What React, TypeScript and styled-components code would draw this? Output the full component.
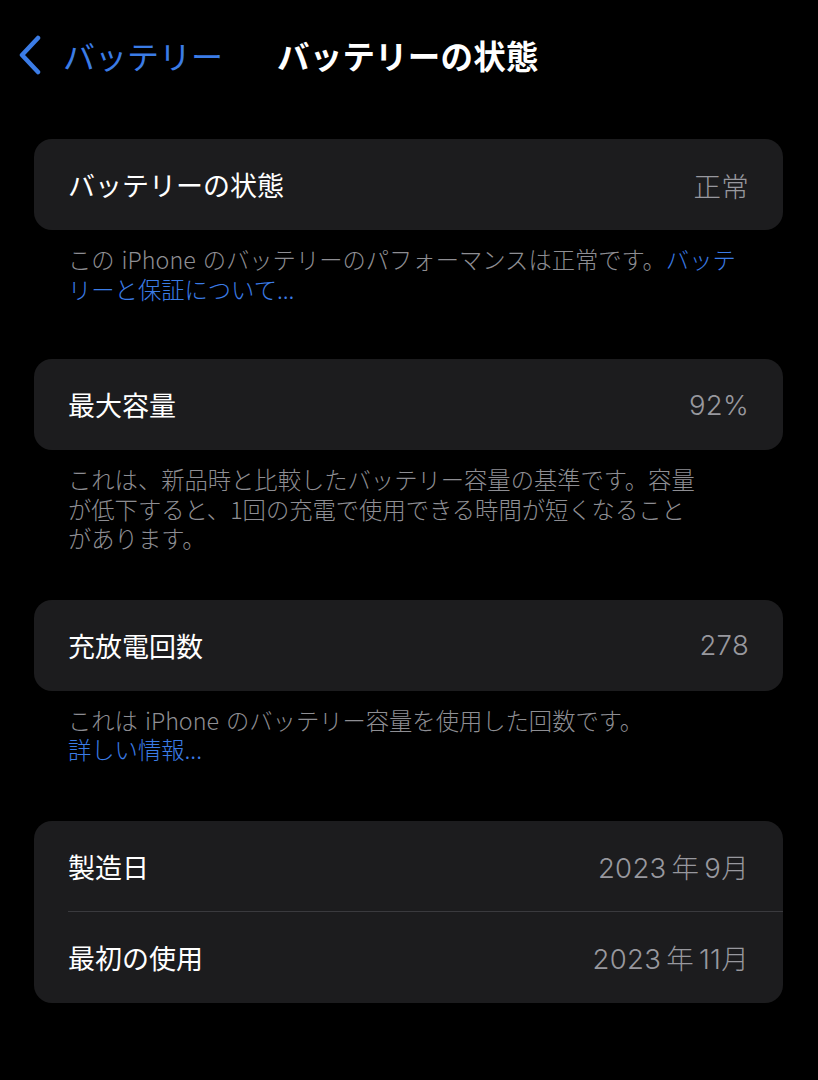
import React from "react";
import styled, { createGlobalStyle } from "styled-components";

const Global = createGlobalStyle`
  html, body { margin: 0; padding: 0; background: #000; }
  body { font-family: "Noto Sans CJK JP", "Noto Sans", sans-serif; -webkit-font-smoothing: antialiased; }
`;

const Page = styled.div`
  width: 818px;
  min-height: 1080px;
  background: #000;
  box-sizing: border-box;
  padding: 0 35px 0 34px;
`;

const NavBar = styled.div`
  display: flex;
  align-items: center;
  height: 110px;
  margin-left: -17px;
  box-sizing: border-box;
`;

const Back = styled.div`
  display: flex;
  align-items: center;
  gap: 20px;
  color: #3b7ce6;
  font-size: 32px;
  line-height: 1;
  font-weight: 400;
  margin-right: 54px;
`;

const Title = styled.div`
  color: #fff;
  font-size: 32.5px;
  font-weight: 700;
  line-height: 1;
  letter-spacing: 0.2px;
`;

const Section = styled.section<{ $top: number }>`
  margin-top: ${(p) => p.$top}px;
`;

const Card = styled.div`
  background: #1c1c1e;
  border-radius: 18px;
  overflow: hidden;
`;

const Row = styled.div<{ $sep?: boolean }>`
  position: relative;
  display: flex;
  align-items: center;
  justify-content: space-between;
  height: 91px;
  padding: 0 34px;
  box-sizing: border-box;
  ${(p) =>
    p.$sep
      ? `&::after { content: ""; position: absolute; left: 34px; right: 0; bottom: 0; height: 1px; background: #3a3a3e; }`
      : ""}
`;

const Label = styled.span`
  color: #fff;
  font-size: 27px;
  font-weight: 400;
`;

const Value = styled.span`
  color: #98989e;
  font-size: 27.5px;
  font-weight: 300;
  font-family: "Inter", "Noto Sans CJK JP", sans-serif;
  letter-spacing: 0.3px;
`;

const Kanji = styled.span<{ $gap?: boolean }>`
  font-family: "Noto Sans CJK JP", sans-serif;
  margin: 0 ${(p) => (p.$gap ? "5px" : "0")};
`;

const Footer = styled.p`
  margin: 15px 0 0;
  padding: 0 34px;
  color: #8e8e93;
  font-size: 23.3px;
  line-height: 29.5px;
  font-weight: 300;
  white-space: nowrap;
`;

const Latin = styled.span`
  margin: 0 7px;
`;

const Link = styled.span`
  color: #3b7ce6;
`;

const Chevron = () => (
  <svg width="26" height="40" viewBox="0 0 26 40" fill="none">
    <path d="M21 3 L5 20 L21 37" stroke="#3b7ce6" strokeWidth="4.5" strokeLinecap="round" strokeLinejoin="round" />
  </svg>
);

export default function App() {
  return (
    <>
      <Global />
      <Page>
        <NavBar>
          <Back>
            <Chevron />
            <span>バッテリー</span>
          </Back>
          <Title>バッテリーの状態</Title>
        </NavBar>

        <Section $top={29}>
          <Card>
            <Row>
              <Label>バッテリーの状態</Label>
              <Value><Kanji>正常</Kanji></Value>
            </Row>
          </Card>
          <Footer>
            この<Latin>iPhone</Latin>のバッテリーのパフォーマンスは正常です。<Link>バッテ</Link>
            <br />
            <Link>リーと保証について...</Link>
          </Footer>
        </Section>

        <Section $top={55}>
          <Card>
            <Row>
              <Label>最大容量</Label>
              <Value>92%</Value>
            </Row>
          </Card>
          <Footer>
            これは、新品時と比較したバッテリー容量の基準です。容量
            <br />
            が低下すると、1回の充電で使用できる時間が短くなること
            <br />
            があります。
          </Footer>
        </Section>

        <Section $top={46}>
          <Card>
            <Row>
              <Label>充放電回数</Label>
              <Value>278</Value>
            </Row>
          </Card>
          <Footer>
            これは<Latin>iPhone</Latin>のバッテリー容量を使用した回数です。
            <br />
            <Link>詳しい情報...</Link>
          </Footer>
        </Section>

        <Section $top={56}>
          <Card>
            <Row $sep>
              <Label>製造日</Label>
              <Value>2023<Kanji $gap>年</Kanji>9<Kanji>月</Kanji></Value>
            </Row>
            <Row>
              <Label>最初の使用</Label>
              <Value>2023<Kanji $gap>年</Kanji>11<Kanji>月</Kanji></Value>
            </Row>
          </Card>
        </Section>
      </Page>
    </>
  );
}
